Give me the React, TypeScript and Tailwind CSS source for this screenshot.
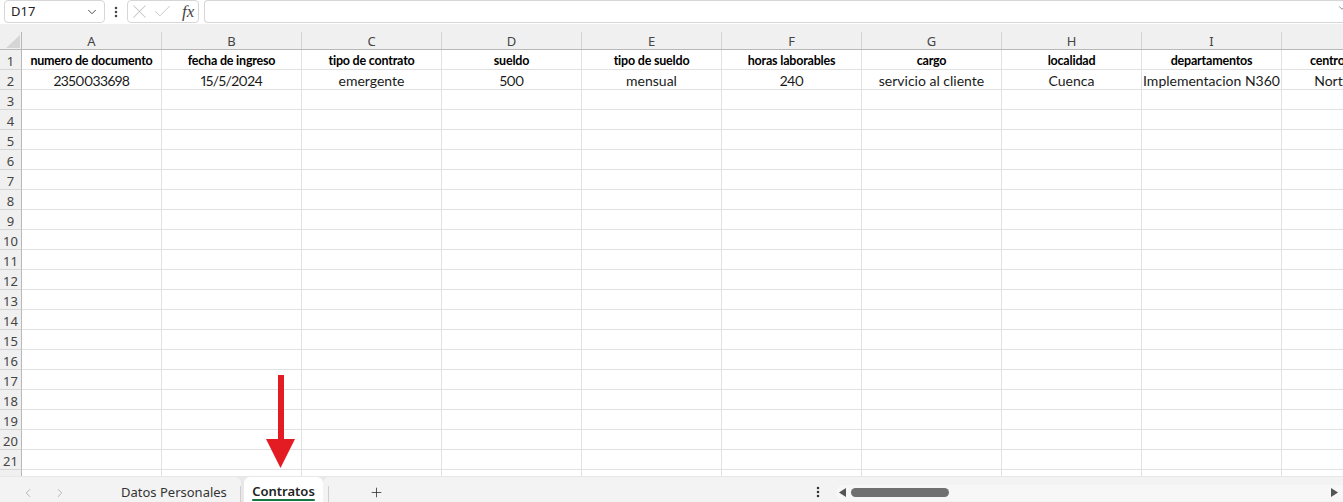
import { Check, ChevronDown, ChevronLeft, ChevronRight, EllipsisVertical, Plus, X } from "lucide-react";

type Column = { letter: string; title: string; value: string; numeric?: boolean };

const columns: Column[] = [
  { letter: "A", title: "numero de documento", value: "2350033698", numeric: true },
  { letter: "B", title: "fecha de ingreso", value: "15/5/2024", numeric: true },
  { letter: "C", title: "tipo de contrato", value: "emergente" },
  { letter: "D", title: "sueldo", value: "500", numeric: true },
  { letter: "E", title: "tipo de sueldo", value: "mensual" },
  { letter: "F", title: "horas laborables", value: "240", numeric: true },
  { letter: "G", title: "cargo", value: "servicio al cliente" },
  { letter: "H", title: "localidad", value: "Cuenca" },
  { letter: "I", title: "departamentos", value: "Implementacion N360" },
  { letter: "J", title: "centro de costo", value: "Norte Quito" },
];

const rowCount = 22;

function FormulaBar() {
  return (
    <div className="flex h-[24px] shrink-0 items-start bg-white pl-[4px]">
      <div className="flex h-[23px] w-[101px] items-center justify-between rounded-[4px] border border-[#d6d6d6] pl-[6px] pr-[5px] text-[13px] text-[#222]">
        <span>D17</span>
        <ChevronDown size={14} strokeWidth={1.6} className="text-[#444]" />
      </div>
      <div className="flex h-[23px] w-[22px] items-center justify-center text-[#444]">
        <EllipsisVertical size={14} strokeWidth={2.4} />
      </div>
      <div className="flex h-[23px] w-[72px] items-center rounded-[4px] border border-[#d6d6d6]">
        <X size={23} strokeWidth={1.1} className="text-[#c6c6c6]" />
        <Check size={21} strokeWidth={1.1} className="ml-[1px] text-[#c6c6c6]" />
        <span className="ml-[9px] font-['Liberation_Serif',serif] text-[17px] italic leading-none text-[#444]">fx</span>
      </div>
      <div className="relative ml-[5px] h-[23px] flex-1 rounded-l-[4px] border border-r-0 border-[#d6d6d6]">
        <ChevronDown size={10} strokeWidth={1.6} className="absolute right-[-4px] top-[2px] text-[#555]" />
      </div>
    </div>
  );
}

function Sheet() {
  return (
    <div className="h-[444px] shrink-0 overflow-hidden bg-white">
      {/* column letters */}
      <div className="flex h-[18px] border-b border-[#b8b8b8] bg-[#f0f0f0]">
        <div className="relative w-[22px] shrink-0 border-r border-[#b8b8b8]">
          <svg width="14" height="13" viewBox="0 0 14 13" className="absolute left-[6px] top-[3px]">
            <polygon points="0,13 14,13 14,0" fill="#d5d5d5" />
          </svg>
        </div>
        {columns.map((c) => (
          <div
            key={c.letter}
            className="w-[140px] shrink-0 border-r border-[#d4d4d4] text-center text-[13px] leading-[19px] text-[#444]"
          >
            {c.letter}
          </div>
        ))}
      </div>

      {Array.from({ length: rowCount }, (_, i) => {
        const row = i + 1;
        return (
          <div key={row} className="flex h-[20px]">
            <div className="w-[22px] shrink-0 border-r border-b border-r-[#b8b8b8] border-b-[#d6d6d6] bg-[#f0f0f0] text-center text-[13px] leading-[22px] text-[#444]">
              {row}
            </div>
            {columns.map((c) => {
              let text = "";
              let style = "text-[14px] text-[#1a1a1a]";
              if (row === 1) {
                text = c.title;
                style = "text-[12.5px] font-bold tracking-[-0.2px] text-black";
              } else if (row === 2) {
                text = c.value;
                if (c.numeric) style = "text-[14px] tracking-[-0.6px] text-[#1a1a1a] proportional-nums";
              }
              return (
                <div
                  key={c.letter}
                  className={`w-[140px] shrink-0 whitespace-nowrap border-r border-b border-[#e1e1e1] text-center font-['Lato',sans-serif] leading-[22px] ${style}`}
                >
                  {text}
                </div>
              );
            })}
          </div>
        );
      })}
    </div>
  );
}

function SheetTabs() {
  return (
    <div className="flex h-[26px] shrink-0 items-end bg-[#e8e8e8] text-[13px]">
      <div className="flex h-[25px] w-[241px] shrink-0 items-center rounded-tr-[6px] bg-[#f3f3f3] pt-[6px]">
        <ChevronLeft size={14} strokeWidth={1.4} className="ml-[21px] text-[#a8a8a8]" />
        <ChevronRight size={14} strokeWidth={1.4} className="ml-[18px] text-[#a8a8a8]" />
        <span className="ml-[54px] text-[#333]">Datos Personales</span>
        <div className="ml-auto h-[16px] w-px self-end bg-[#cfcfcf]" />
      </div>

      <div className="relative ml-[3px] flex h-[25px] w-[79px] shrink-0 items-center justify-center rounded-t-[6px] bg-white pt-[5px] font-semibold text-[#222]">
        <span>Contratos</span>
        <div className="absolute bottom-[1px] left-[8px] right-[8px] h-[2px] rounded-full bg-[#1b7344]" />
      </div>

      <div className="flex h-[25px] flex-1 items-center rounded-tl-[6px] bg-[#f3f3f3]">
        <div className="ml-[5px] h-[16px] w-px self-end bg-[#cfcfcf]" />
        <Plus size={15} strokeWidth={1.3} className="ml-[40px] mt-[6px] text-[#333]" />
        <EllipsisVertical size={14} strokeWidth={2.4} className="ml-[427px] mt-[5px] text-[#333]" />
        {/* horizontal scrollbar */}
        <div className="ml-[11px] mt-[6px] flex h-[16px] flex-1 items-center rounded-l-full bg-[#f7f7f7] pr-[5px]">
          <svg width="7" height="9" viewBox="0 0 7 9" className="ml-[3px]">
            <polygon points="7,0 7,9 0,4.5" fill="#555" />
          </svg>
          <div className="ml-[5px] h-[9px] w-[98px] rounded-full bg-[#707070]" />
          <svg width="7" height="9" viewBox="0 0 7 9" className="ml-auto">
            <polygon points="0,0 0,9 7,4.5" fill="#555" />
          </svg>
        </div>
      </div>
    </div>
  );
}

export default function App() {
  return (
    <div className="relative flex h-[502px] w-[1343px] flex-col overflow-hidden bg-white font-['Noto_Sans',sans-serif]">
      <FormulaBar />
      <div className="h-[8px] shrink-0 bg-[#f0f0f0]" />
      <Sheet />
      <SheetTabs />

      {/* red pointer towards the active sheet tab */}
      <svg
        width="34"
        height="97"
        viewBox="0 0 34 97"
        className="pointer-events-none absolute left-[264px] top-[373px]"
      >
        <rect x="14" y="2" width="6" height="66" fill="#e31b23" />
        <polygon points="2,66 31,66 16.5,95" fill="#e31b23" />
      </svg>
    </div>
  );
}
